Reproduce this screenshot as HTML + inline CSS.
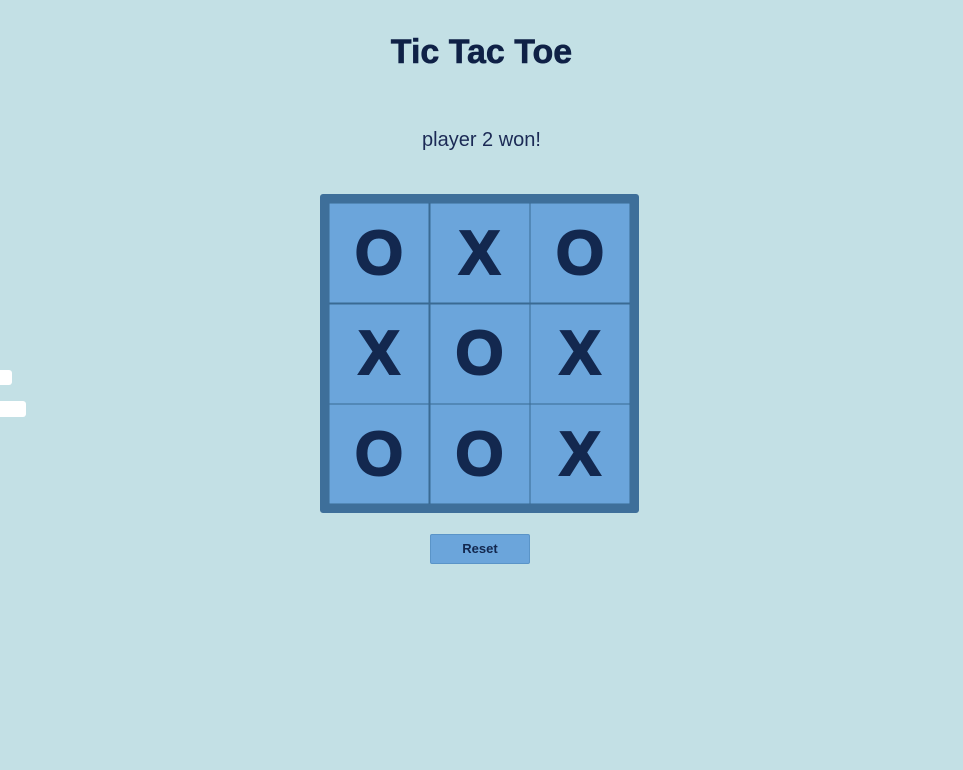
<!DOCTYPE html>
<html><head><style>
body{margin:0;width:963px;height:770px;background:#c3e0e5;font-family:"Liberation Sans",sans-serif;position:relative;overflow:hidden}
h1{position:absolute;top:32px;left:0;width:963px;text-align:center;margin:0;font-size:34px;line-height:40px;color:#0f2146;font-weight:bold;-webkit-text-stroke:0.6px #0f2146}
.st{position:absolute;top:128px;left:0;width:963px;text-align:center;font-size:20px;line-height:24px;color:#1b2a55}
.board{position:absolute;left:320px;top:194px;width:301px;height:301px;border:9px solid #3e6f9a;border-radius:3px;background:#3a6a93;display:grid;grid-template-columns:100px 100px 100px;grid-template-rows:100px 100px 100px;gap:0.5px}
.c{background:#6ba5db;display:flex;align-items:center;justify-content:center;font-weight:bold;font-size:62px;color:#13284f;-webkit-text-stroke:2px #13284f;box-shadow:inset 0 0 0 0.5px #3a6a93}
.btn{position:absolute;left:430px;top:534px;width:98px;height:28px;background:#6ba5db;border:1px solid #5a94c8;border-radius:2px;text-align:center;line-height:28px;font-size:13px;font-weight:bold;color:#13284f}
.w{position:absolute;background:#fff;border-radius:3px}
</style></head><body>
<h1>Tic Tac Toe</h1>
<div class="st">player 2 won!</div>
<div class="board">
<div class="c">O</div><div class="c">X</div><div class="c">O</div>
<div class="c">X</div><div class="c">O</div><div class="c">X</div>
<div class="c">O</div><div class="c">O</div><div class="c">X</div>
</div>
<div class="btn">Reset</div>
<div class="w" style="left:-4px;top:370px;width:16px;height:15px"></div>
<div class="w" style="left:-4px;top:401px;width:30px;height:16px"></div>
</body></html>
